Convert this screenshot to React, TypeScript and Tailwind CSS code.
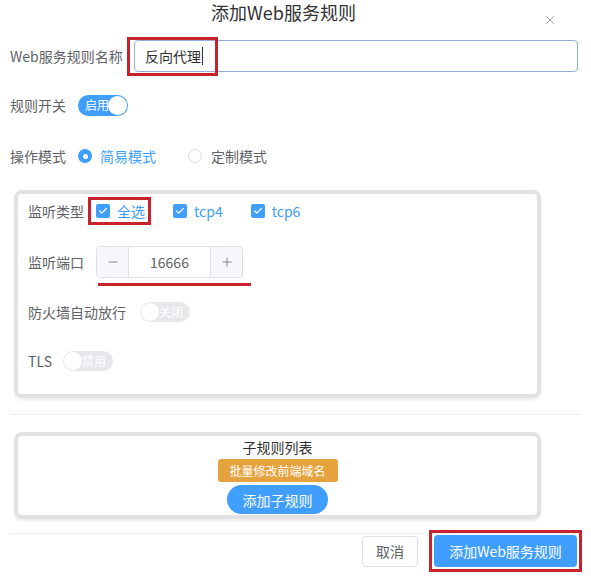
import React from 'react'
import { X, Check, Minus, Plus } from 'lucide-react'

function Switch({ on, text }: { on: boolean; text: string }) {
  if (on) {
    return (
      <div className="relative w-[50px] h-[21px] rounded-full bg-[#409eff] flex items-center">
        <span className="text-white text-[12px] leading-none pl-[7px]">{text}</span>
        <span className="absolute right-[1px] top-[1px] w-[19px] h-[19px] rounded-full bg-white" />
      </div>
    )
  }
  return (
    <div className="relative w-[50px] h-[20px] rounded-full bg-[#e6e7ea] flex items-center justify-end">
      <span className="text-white text-[12px] leading-none pr-[7px]">{text}</span>
      <span className="absolute left-[1px] top-[1px] w-[18px] h-[18px] rounded-full bg-white" />
    </div>
  )
}

function CheckBox({ label }: { label: string }) {
  return (
    <div className="flex items-center gap-[7px]">
      <span className="w-[14px] h-[14px] rounded-[2px] bg-[#409eff] flex items-center justify-center">
        <Check size={10} strokeWidth={3} color="#ffffff" />
      </span>
      <span className="text-[14px] leading-[20px] text-[#409eff]">{label}</span>
    </div>
  )
}

export default function App() {
  return (
    <div className="relative w-[591px] h-[580px] bg-white px-[10px] text-[#606266] font-['Noto_Sans_CJK_SC',sans-serif] overflow-hidden">
      {/* Header */}
      <div className="relative h-[40px]">
        <div className="text-center text-[18px] leading-[24px] text-[#303133] pr-[24px]">添加Web服务规则</div>
        <button className="absolute right-[24px] top-[13px] text-[#909399]">
          <X size={14} strokeWidth={1.5} />
        </button>
      </div>

      {/* Name */}
      <div className="flex items-center h-[32px]">
        <span className="w-[124px] text-[14px] leading-[20px]">Web服务规则名称</span>
        <div className="relative flex-1 mr-[3px] h-[32px] border border-[#8fb3d6] rounded-[4px] flex items-center pl-[10px]">
          <span className="text-[14px] leading-[20px] text-[#303133]">反向代理</span>
          <span className="w-px h-[18px] bg-[#303133] ml-[1px]" />
          <span className="absolute left-[-8px] top-[-4px] w-[91px] h-[39px] border-[3px] border-[#c8232c]" />
        </div>
      </div>

      {/* Switch */}
      <div className="flex items-center gap-[12px] mt-[22px] h-[22px]">
        <span className="text-[14px] leading-[20px]">规则开关</span>
        <Switch on text="启用" />
      </div>

      {/* Mode */}
      <div className="flex items-center mt-[30px] h-[20px]">
        <span className="text-[14px] leading-[20px] mr-[12px]">操作模式</span>
        <span className="w-[14px] h-[14px] rounded-full bg-[#409eff] flex items-center justify-center">
          <span className="w-[5px] h-[5px] rounded-full bg-white" />
        </span>
        <span className="ml-[8px] text-[14px] leading-[20px] text-[#409eff]">简易模式</span>
        <span className="ml-[32px] w-[14px] h-[14px] rounded-full border border-[#dcdfe6] bg-white" />
        <span className="ml-[9px] text-[14px] leading-[20px]">定制模式</span>
      </div>

      {/* Listen card */}
      <div className="mt-[24px] ml-[4px] w-[527px] h-[208px] border-[4px] border-[#e2e2e2] rounded-[8px] shadow-[0_2px_3px_rgba(0,0,0,0.08)] pl-[10px] pt-[7px]">
        <div className="flex items-center h-[20px]">
          <span className="text-[14px] leading-[20px] mr-[12px]">监听类型</span>
          <div className="relative flex items-center gap-[28px]">
            <CheckBox label="全选" />
            <CheckBox label="tcp4" />
            <CheckBox label="tcp6" />
            <span className="absolute left-[-8px] top-[-4px] w-[63px] h-[28px] border-[3px] border-[#c8232c]" />
          </div>
        </div>

        <div className="flex items-center mt-[25px] h-[32px]">
          <span className="text-[14px] leading-[20px] mr-[12px]">监听端口</span>
          <div className="relative flex h-[32px] w-[147px] border border-[#dcdfe6] rounded-[4px]">
            <span className="w-[32px] bg-[#f5f7fa] border-r border-[#dcdfe6] flex items-center justify-center text-[#606266] rounded-l-[4px]">
              <Minus size={14} strokeWidth={1.3} />
            </span>
            <span className="flex-1 flex items-center justify-center text-[14px] text-[#606266]">16666</span>
            <span className="w-[32px] bg-[#f5f7fa] border-l border-[#dcdfe6] flex items-center justify-center text-[#606266] rounded-r-[4px]">
              <Plus size={14} strokeWidth={1.3} />
            </span>
            <span className="absolute left-[1px] top-[36px] w-[153px] h-[3px] bg-[#c8232c]" />
          </div>
        </div>

        <div className="flex items-center mt-[24px] h-[20px]">
          <span className="text-[14px] leading-[20px] mr-[14px]">防火墙自动放行</span>
          <Switch on={false} text="关闭" />
        </div>

        <div className="flex items-center mt-[29px] h-[20px]">
          <span className="text-[14px] leading-[20px] mr-[11px]">TLS</span>
          <Switch on={false} text="禁用" />
        </div>
      </div>

      <div className="mt-[16px] h-px bg-[#eeeeee]" />

      {/* Sub rules card */}
      <div className="mt-[17px] ml-[4px] w-[527px] h-[87px] border-[4px] border-[#e2e2e2] rounded-[8px] shadow-[0_2px_3px_rgba(0,0,0,0.08)] flex flex-col items-center pt-[1px]">
        <span className="text-[14px] leading-[20px] text-[#303133]">子规则列表</span>
        <button className="mt-[2px] w-[120px] h-[23px] rounded-[3px] bg-[#e6a23c] text-white text-[12px] leading-none">批量修改前端域名</button>
        <button className="mt-[3px] w-[101px] h-[29px] rounded-full bg-[#409eff] text-white text-[14px] leading-none">添加子规则</button>
      </div>

      <div className="mt-[14px] h-px bg-[#eeeeee]" />

      {/* Footer */}
      <div className="flex justify-end gap-[16px] mt-[1px] mr-[4px]">
        <button className="w-[56px] h-[31px] mt-[1px] border border-[#dcdfe6] rounded-[4px] bg-white text-[14px] text-[#606266]">取消</button>
        <div className="relative">
          <button className="w-[143px] h-[32px] rounded-[4px] bg-[#409eff] text-white text-[14px]">添加Web服务规则</button>
          <span className="absolute left-[-5px] top-[-5px] w-[153px] h-[42px] border-[3px] border-[#c8232c]" />
        </div>
      </div>
    </div>
  )
}
